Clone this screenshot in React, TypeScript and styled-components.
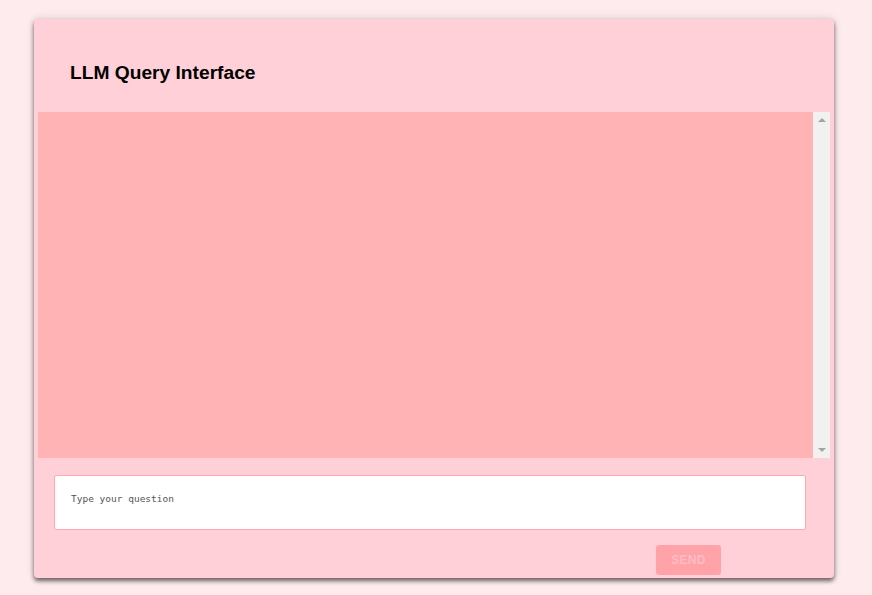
import styled, {createGlobalStyle} from "styled-components"

const GlobalStyle = createGlobalStyle`
  html, body {
    margin: 0;
    padding: 0;
    background: #feebee;
    font-family: "Liberation Sans", Arial, sans-serif;
  }
`
const Page = styled.div`
  padding: 19px 38px 17px 34px;
`
const Card = styled.div`
  width: 800px;
  height: 559px;
  background: #ffd0d7;
  border-radius: 4px;
  box-shadow: 0 3px 4px rgba(0, 0, 0, .55), 0 0 8px rgba(0, 0, 0, .15);
  display: flex;
  flex-direction: column;
  box-sizing: border-box;
  overflow: hidden;
`
const Header = styled.div`
  height: 93px;
  padding: 14px 36px 0;
  display: flex;
  align-items: center;
  box-sizing: border-box;
`
const Title = styled.h1`
  margin: 0;
  font-size: 19.2px;
  font-weight: bold;
  color: #000;
`
const MessagesPane = styled.div`
  margin: 0 4px;
  height: 346px;
  display: flex;
  flex-shrink: 0;
`
const Messages = styled.div`
  flex: 1;
  background: #ffb3b5;
  overflow: hidden;
`
const ScrollTrack = styled.div`
  width: 17px;
  background: #f1f1f1;
  display: flex;
  flex-direction: column;
  justify-content: space-between;
  align-items: center;
  padding: 6px 0;
  box-sizing: border-box;
`
const Arrow = styled.div<{$down?: boolean}>`
  width: 0;
  height: 0;
  border-left: 4px solid transparent;
  border-right: 4px solid transparent;
  ${p => p.$down ? 'border-top: 4px solid #a3a3a3;' : 'border-bottom: 4px solid #a3a3a3;'}
`
const InputRow = styled.div`
  padding: 17px 28px 0 20px;
`
const Input = styled.textarea`
  display: block;
  width: 100%;
  height: 55px;
  box-sizing: border-box;
  border: 1px solid #ffa9ad;
  border-radius: 2px;
  background: #fff;
  resize: none;
  padding: 17px 16px;
  font-family: "DejaVu Sans Mono", monospace;
  font-size: 9.5px;
  outline: none;
  &::placeholder {
    color: #555;
  }
`
const Actions = styled.div`
  display: flex;
  justify-content: flex-end;
  padding: 15px 113px 0 0;
`
const SendButton = styled.button`
  width: 65px;
  height: 30px;
  border: 0;
  border-radius: 3px;
  background: #ffa3a9;
  color: #ffbcc3;
  font-family: "Liberation Sans", Arial, sans-serif;
  font-weight: bold;
  font-size: 12px;
  letter-spacing: .02em;
`
export default function App() {
  return <Page>
    <GlobalStyle/>
    <Card>
      <Header>
        <Title>LLM Query Interface</Title>
      </Header>
      <MessagesPane>
        <Messages/>
        <ScrollTrack>
          <Arrow/>
          <Arrow $down/>
        </ScrollTrack>
      </MessagesPane>
      <InputRow>
        <Input placeholder="Type your question"/>
      </InputRow>
      <Actions>
        <SendButton disabled>SEND</SendButton>
      </Actions>
    </Card>
  </Page>
}
